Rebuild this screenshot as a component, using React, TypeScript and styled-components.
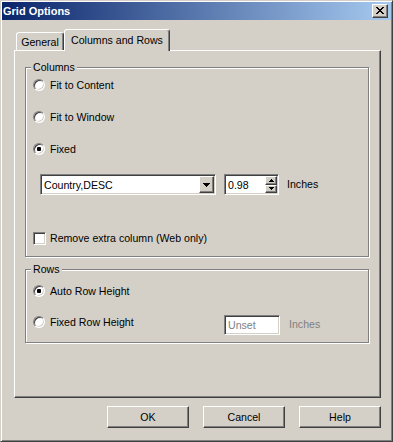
import React from 'react';
import styled, { createGlobalStyle } from 'styled-components';

const face = '#d4d0c8';
const shadow = '#808080';
const darkShadow = '#404040';
const highlight = '#ffffff';
const uiSize = '10.6px';

const GlobalStyle = createGlobalStyle`
  html, body {
    margin: 0;
    padding: 0;
    background: ${face};
  }
  body {
    font-family: "Liberation Sans", Arial, sans-serif;
    font-size: ${uiSize};
    color: #000;
  }
  * {
    box-sizing: border-box;
  }
`;

// window frame
const Window = styled.div`
  width: 393px;
  height: 442px;
  background: ${face};
  border: 1px solid;
  border-color: ${face} ${darkShadow} ${darkShadow} ${face};
  box-shadow: inset 1px 1px 0 ${highlight}, inset -1px -1px 0 ${shadow};
  padding: 1px;
  display: flex;
  flex-direction: column;
`;

const TitleBar = styled.div`
  height: 18px;
  flex-shrink: 0;
  display: flex;
  align-items: center;
  justify-content: space-between;
  padding: 0 3px 0 1px;
  background: linear-gradient(to right, #0a246a, #a6caf0);
`;

const TitleText = styled.span`
  color: #fff;
  font-weight: bold;
  font-size: 11px;
  line-height: 18px;
`;

const Raised = styled.div`
  background: ${face};
  border: 1px solid;
  border-color: ${highlight} ${darkShadow} ${darkShadow} ${highlight};
  box-shadow: inset -1px -1px 0 ${shadow};
  display: flex;
  align-items: center;
  justify-content: center;
`;

const CloseButton = styled(Raised)`
  width: 16px;
  height: 14px;
  padding: 0 1px 1px 0;
`;

const Body = styled.div`
  flex: 1;
  display: flex;
  flex-direction: column;
  padding: 9px 10px 0 12px;
`;

// tabs
const TabStrip = styled.div`
  display: flex;
  align-items: flex-end;
  height: 21px;
  padding-left: 2px;
`;

const Tab = styled.div<{ $active?: boolean; $width: number }>`
  position: relative;
  width: ${({ $width }) => $width}px;
  height: ${({ $active }) => ($active ? 22 : 18)}px;
  margin-bottom: ${({ $active }) => ($active ? -1 : 0)}px;
  z-index: ${({ $active }) => ($active ? 1 : 0)};
  background: ${face};
  border: 1px solid;
  border-bottom: none;
  border-color: ${highlight} ${darkShadow} transparent ${highlight};
  border-radius: 3px 3px 0 0;
  box-shadow: inset -1px 0 0 ${shadow};
  display: flex;
  align-items: center;
  justify-content: center;
  padding-bottom: ${({ $active }) => ($active ? 2 : 0)}px;
`;

const Panel = styled.div`
  height: 348px;
  border: 1px solid;
  border-color: ${highlight} ${darkShadow} ${darkShadow} ${highlight};
  box-shadow: inset -1px -1px 0 ${shadow};
  padding: 16px 11px 0 10px;
  display: flex;
  flex-direction: column;
`;

// group boxes
const GroupBox = styled.div<{ $height: number; $top: number; $pad: number }>`
  position: relative;
  height: ${({ $height }) => $height}px;
  margin-top: ${({ $top }) => $top}px;
  border: 1px solid ${shadow};
  box-shadow: inset 1px 1px 0 ${highlight}, 1px 1px 0 ${highlight};
  padding: ${({ $pad }) => $pad}px 0 0 7px;
  display: flex;
  flex-direction: column;
`;

const GroupLabel = styled.span`
  position: absolute;
  top: -7px;
  left: 5px;
  padding: 0 2px;
  background: ${face};
  line-height: 13px;
`;

const OptionRow = styled.label<{ $top?: number; $width?: number }>`
  display: flex;
  align-items: center;
  gap: 5px;
  height: 16px;
  margin-top: ${({ $top }) => $top ?? 0}px;
  width: ${({ $width }) => ($width ? `${$width}px` : 'auto')};
  flex-shrink: 0;
`;

const Radio = styled.span<{ $checked?: boolean }>`
  position: relative;
  width: 12px;
  height: 12px;
  border-radius: 50%;
  background: #fff;
  border: 1px solid;
  border-color: ${shadow} ${highlight} ${highlight} ${shadow};
  box-shadow: inset 1px 1px 0 ${darkShadow}, inset -1px -1px 0 ${face};
  flex-shrink: 0;

  &::after {
    content: '';
    display: ${({ $checked }) => ($checked ? 'block' : 'none')};
    position: absolute;
    left: 3px;
    top: 3px;
    width: 4px;
    height: 4px;
    border-radius: 1px;
    background: #000;
  }
`;

const CheckBox = styled.span`
  width: 13px;
  height: 13px;
  background: #fff;
  border: 1px solid;
  border-color: ${shadow} ${highlight} ${highlight} ${shadow};
  box-shadow: inset 1px 1px 0 ${darkShadow}, inset -1px -1px 0 ${face};
  flex-shrink: 0;
`;

const CheckRow = styled(OptionRow)`
  gap: 4px;
`;

const FieldRow = styled.div<{ $top: number; $indent: number }>`
  display: flex;
  align-items: flex-start;
  margin-top: ${({ $top }) => $top}px;
  padding-left: ${({ $indent }) => $indent}px;
`;

const Sunken = styled.div<{ $width: number; $height?: number }>`
  width: ${({ $width }) => $width}px;
  height: ${({ $height }) => $height ?? 21}px;
  background: #fff;
  border: 1px solid;
  border-color: ${shadow} ${highlight} ${highlight} ${shadow};
  box-shadow: inset 1px 1px 0 ${darkShadow}, inset -1px -1px 0 ${face};
  display: flex;
  align-items: center;
  padding: 1px 1px 1px 3px;
  flex-shrink: 0;
`;

const FieldText = styled.span<{ $disabled?: boolean }>`
  flex: 1;
  color: ${({ $disabled }) => ($disabled ? shadow : '#000')};
`;

const ComboButton = styled(Raised)`
  width: 15px;
  height: 17px;
`;

const SpinStack = styled.div`
  display: flex;
  flex-direction: column;
  width: 12px;
  height: 17px;
`;

const SpinButton = styled(Raised)`
  flex: 1;
`;

const UnitLabel = styled.span<{ $gap: number; $disabled?: boolean }>`
  margin-left: ${({ $gap }) => $gap}px;
  line-height: 21px;
  color: ${({ $disabled }) => ($disabled ? shadow : '#000')};
`;

// dialog buttons
const ButtonRow = styled.div`
  display: flex;
  justify-content: flex-end;
  gap: 14px;
  margin-top: 8px;
`;

const PushButton = styled(Raised)`
  width: 82px;
  height: 22px;
  padding-bottom: 1px;
`;

const Pixels = ({ w, h, rows }: { w: number; h: number; rows: string[] }) => (
  <svg width={w} height={h} viewBox={`0 0 ${w} ${h}`} shapeRendering="crispEdges">
    {rows.map((r, y) =>
      r.split('').map((c, x) => (c === 'X' ? <rect key={`${x}-${y}`} x={x} y={y} width={1} height={1} fill="#000" /> : null))
    )}
  </svg>
);

const closeGlyph = ['XX....XX', '.XX..XX.', '..XXXX..', '...XX...', '..XXXX..', '.XX..XX.', 'XX....XX'];
const downGlyph = ['XXXXXXX', '.XXXXX.', '..XXX..', '...X...'];
const spinUp = ['..X..', '.XXX.', 'XXXXX'];
const spinDown = ['XXXXX', '.XXX.', '..X..'];

export default function App() {
  return (
    <>
      <GlobalStyle />
      <Window>
        <TitleBar>
          <TitleText>Grid Options</TitleText>
          <CloseButton>
            <Pixels w={8} h={7} rows={closeGlyph} />
          </CloseButton>
        </TitleBar>
        <Body>
          <TabStrip>
            <Tab $width={48}>General</Tab>
            <Tab $width={106} $active>
              Columns and Rows
            </Tab>
          </TabStrip>
          <Panel>
            <GroupBox $height={190} $top={0} $pad={9}>
              <GroupLabel>Columns</GroupLabel>
              <OptionRow>
                <Radio />
                Fit to Content
              </OptionRow>
              <OptionRow $top={16}>
                <Radio />
                Fit to Window
              </OptionRow>
              <OptionRow $top={16}>
                <Radio $checked />
                Fixed
              </OptionRow>
              <FieldRow $top={17} $indent={7}>
                <Sunken $width={176}>
                  <FieldText>Country,DESC</FieldText>
                  <ComboButton>
                    <Pixels w={7} h={4} rows={downGlyph} />
                  </ComboButton>
                </Sunken>
                <Sunken $width={55} style={{ marginLeft: 8 }}>
                  <FieldText>0.98</FieldText>
                  <SpinStack>
                    <SpinButton>
                      <Pixels w={5} h={3} rows={spinUp} />
                    </SpinButton>
                    <SpinButton>
                      <Pixels w={5} h={3} rows={spinDown} />
                    </SpinButton>
                  </SpinStack>
                </Sunken>
                <UnitLabel $gap={8}>Inches</UnitLabel>
              </FieldRow>
              <CheckRow $top={35}>
                <CheckBox />
                Remove extra column (Web only)
              </CheckRow>
            </GroupBox>
            <GroupBox $height={74} $top={12} $pad={13}>
              <GroupLabel>Rows</GroupLabel>
              <OptionRow>
                <Radio $checked />
                Auto Row Height
              </OptionRow>
              <FieldRow $top={15} $indent={0}>
                <OptionRow $width={191}>
                  <Radio />
                  Fixed Row Height
                </OptionRow>
                <Sunken $width={56} $height={20} style={{ marginTop: 1 }}>
                  <FieldText $disabled>Unset</FieldText>
                </Sunken>
                <UnitLabel $gap={9} $disabled>
                  Inches
                </UnitLabel>
              </FieldRow>
            </GroupBox>
          </Panel>
          <ButtonRow>
            <PushButton>OK</PushButton>
            <PushButton>Cancel</PushButton>
            <PushButton>Help</PushButton>
          </ButtonRow>
        </Body>
      </Window>
    </>
  );
}
